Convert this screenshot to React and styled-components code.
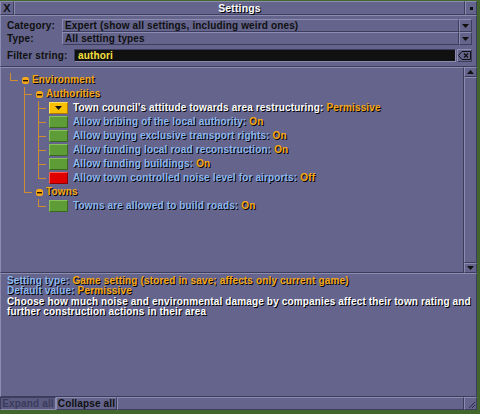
import styled, { createGlobalStyle, css } from "styled-components";

const C = {
  base: "#64648c",
  light: "#8c8cb0",
  dark: "#3c3c5c",
  orange: "#f6a818",
  blue: "#8cb8f0",
  white: "#fcfcfc",
  line: "#d08c30",
};

const GlobalStyle = createGlobalStyle`
  html, body { margin: 0; padding: 0; }
  body {
    width: 480px;
    height: 414px;
    overflow: hidden;
    background: #43662c;
    font-family: "Liberation Sans", Arial, sans-serif;
    font-weight: bold;
    font-size: 10px;
    letter-spacing: 0.15px;
  }
`;

const bevel = css`
  border-top: 1px solid ${C.light};
  border-left: 1px solid ${C.light};
  border-right: 1px solid ${C.dark};
  border-bottom: 1px solid ${C.dark};
  box-sizing: border-box;
`;

const sunken = css`
  border-top: 1px solid ${C.dark};
  border-left: 1px solid ${C.dark};
  border-right: 1px solid ${C.light};
  border-bottom: 1px solid ${C.light};
  box-sizing: border-box;
`;

const Window = styled.div`
  width: 477px;
  height: 409px;
  margin-top: 1px;
  display: flex;
  flex-direction: column;
  background: ${C.base};
`;

const TitleBar = styled.div`
  display: flex;
  height: 14px;
`;

const CloseBox = styled.div`
  ${bevel};
  width: 14px;
  display: flex;
  align-items: center;
  justify-content: center;
  color: #101010;
  font-size: 11px;
  line-height: 12px;
`;

const Caption = styled.div`
  ${bevel};
  flex: 1;
  text-align: center;
  color: ${C.white};
  text-shadow: 1px 1px 0 #000;
  line-height: 12px;
  font-size: 10.5px;
`;

const StickyBox = styled.div`
  ${bevel};
  width: 12px;
  display: flex;
  align-items: center;
  justify-content: center;

  &::after {
    content: "";
    width: 3px;
    height: 3px;
    background: #101010;
  }
`;

const TopPanel = styled.div`
  ${bevel};
  height: 52px;
  padding: 3px 4px 0 6px;
  display: flex;
  flex-direction: column;
`;

const FormRow = styled.div`
  display: flex;
  height: 13px;
  margin-top: ${(p) => p.$gap || 0}px;
`;

const Label = styled.div`
  width: ${(p) => p.$w}px;
  color: #101010;
  line-height: 13px;
`;

const DropText = styled.div`
  ${bevel};
  flex: 1;
  color: #101010;
  line-height: 11px;
  padding-left: 2px;
  white-space: nowrap;
  overflow: hidden;
`;

const ArrowButton = styled.div`
  ${bevel};
  width: ${(p) => p.$w || 13}px;
  height: ${(p) => p.$h || 13}px;
  display: flex;
  align-items: center;
  justify-content: center;
  flex-shrink: 0;
`;

const EditBox = styled.div`
  ${sunken};
  flex: 1;
  background: #111111;
  color: #f8e040;
  line-height: 11px;
  padding-left: 3px;
  margin-right: 1px;
`;

const TreePanel = styled.div`
  display: flex;
  height: 206px;
`;

const TreeList = styled.div`
  ${bevel};
  flex: 1;
  padding-top: 5px;
  display: flex;
  flex-direction: column;
`;

const Scrollbar = styled.div`
  width: 13px;
  display: flex;
  flex-direction: column;
`;

const Track = styled.div`
  ${bevel};
  flex: 1;
`;

const TreeRow = styled.div`
  display: flex;
  align-items: center;
  height: 14px;
  white-space: nowrap;
`;

const Guide = styled.svg`
  flex-shrink: 0;
  display: block;
`;

const GroupIcon = styled.svg`
  display: block;
  margin: 0 3px 0 3px;
  flex-shrink: 0;
`;

const Text = styled.span`
  color: ${(p) => p.$c};
  text-shadow: 1px 1px 0 #000;
  line-height: 14px;
`;

const swatches = {
  on: { bg: "#5e9c38", light: "#88c05c", dark: "#3a6820" },
  off: { bg: "#e00000", light: "#ff5a4a", dark: "#8c0000" },
  drop: { bg: "#f8c000", light: "#fce060", dark: "#b07800" },
};

const SettingBox = styled.div`
  width: 19px;
  height: 12px;
  box-sizing: border-box;
  margin: 0 5px 0 2px;
  flex-shrink: 0;
  background: ${(p) => swatches[p.$kind].bg};
  border-top: 1px solid ${(p) => swatches[p.$kind].light};
  border-left: 1px solid ${(p) => swatches[p.$kind].light};
  border-right: 1px solid ${(p) => swatches[p.$kind].dark};
  border-bottom: 1px solid ${(p) => swatches[p.$kind].dark};
  display: flex;
  align-items: center;
  justify-content: center;
`;

const HelpPanel = styled.div`
  ${bevel};
  height: 124px;
  padding: 2px 2px 3px 6px;
`;

const HelpLine = styled.div`
  line-height: 9.5px;
  white-space: nowrap;
  margin-top: ${(p) => p.$gap || 0}px;
  color: ${(p) => p.$c || C.white};
  text-shadow: 1px 1px 0 #000;
`;

const Value = styled.span`
  color: ${C.orange};
`;

const BottomRow = styled.div`
  display: flex;
  height: 13px;
`;

const Button = styled.div`
  ${(p) => (p.$pressed ? sunken : bevel)};
  width: ${(p) => p.$w}px;
  line-height: 11px;
  text-align: center;
  white-space: nowrap;
  color: ${(p) => (p.$pressed ? "#3a3a5c" : "#101010")};
  background: ${(p) => (p.$pressed ? "#5a5a80" : C.base)};
`;

const Filler = styled.div`
  ${bevel};
  flex: 1;
`;

const ResizeBox = styled.div`
  ${bevel};
  width: 13px;
  display: flex;
  align-items: flex-end;
  justify-content: flex-end;
`;

const Tri = ({ up }) => (
  <svg width="7" height="4" viewBox="0 0 7 4">
    <path d={up ? "M3.5 0 L7 4 L0 4 Z" : "M0 0 L7 0 L3.5 4 Z"} fill="#101010" />
  </svg>
);

const ClearIcon = () => (
  <svg width="13" height="9" viewBox="0 0 13 9">
    <path d="M4 0.5 H12.5 V8.5 H4 L0.5 4.5 Z" fill="none" stroke="#101010" />
    <path d="M6 2.5 L10 6.5 M10 2.5 L6 6.5" stroke="#101010" strokeWidth="1.2" />
  </svg>
);

// guides: one flag per ancestor level, true when that level's line continues
const Branch = ({ guides, last }) => (
  <>
    {guides.map((on, i) => (
      <Guide key={i} width="14" height="14">
        {on && <rect x="9" y="0" width="1" height="14" fill={C.line} />}
      </Guide>
    ))}
    <Guide width="18" height="14">
      <rect x="9" y="0" width="1" height={last ? 8 : 14} fill={C.line} />
      <rect x="9" y="7" width="8" height="1" fill={C.line} />
    </Guide>
  </>
);

const Minus = () => (
  <GroupIcon width="7" height="7" viewBox="0 0 7 7">
    <rect x="0" y="0" width="7" height="7" rx="2.5" fill={C.orange} />
    <rect x="1" y="3" width="5" height="1.4" fill="#201000" />
  </GroupIcon>
);

const rows = [
  { group: true, guides: [], last: true, label: "Environment" },
  { group: true, guides: [false], last: false, label: "Authorities" },
  { guides: [false, true], last: false, kind: "drop", label: "Town council's attitude towards area restructuring:", value: "Permissive", selected: true },
  { guides: [false, true], last: false, kind: "on", label: "Allow bribing of the local authority:", value: "On" },
  { guides: [false, true], last: false, kind: "on", label: "Allow buying exclusive transport rights:", value: "On" },
  { guides: [false, true], last: false, kind: "on", label: "Allow funding local road reconstruction:", value: "On" },
  { guides: [false, true], last: false, kind: "on", label: "Allow funding buildings:", value: "On" },
  { guides: [false, true], last: true, kind: "off", label: "Allow town controlled noise level for airports:", value: "Off" },
  { group: true, guides: [false], last: true, label: "Towns" },
  { guides: [false, false], last: true, kind: "on", label: "Towns are allowed to build roads:", value: "On" },
];

export default function App() {
  return (
    <>
      <GlobalStyle />
      <Window>
        <TitleBar>
          <CloseBox>X</CloseBox>
          <Caption>Settings</Caption>
          <StickyBox />
        </TitleBar>

        <TopPanel>
          <FormRow>
            <Label $w={55}>Category:</Label>
            <DropText>Expert (show all settings, including weird ones)</DropText>
            <ArrowButton><Tri /></ArrowButton>
          </FormRow>
          <FormRow>
            <Label $w={55}>Type:</Label>
            <DropText>All setting types</DropText>
            <ArrowButton><Tri /></ArrowButton>
          </FormRow>
          <FormRow $gap={4}>
            <Label $w={67}>Filter string:</Label>
            <EditBox>authori</EditBox>
            <ArrowButton $w={15}><ClearIcon /></ArrowButton>
          </FormRow>
        </TopPanel>

        <TreePanel>
          <TreeList>
            {rows.map((r, i) => (
              <TreeRow key={i}>
                <Branch guides={r.guides} last={r.last} />
                {r.group ? (
                  <>
                    <Minus />
                    <Text $c={C.orange}>{r.label}</Text>
                  </>
                ) : (
                  <>
                    <SettingBox $kind={r.kind}>{r.kind === "drop" && <Tri />}</SettingBox>
                    <Text $c={r.selected ? C.white : C.blue}>
                      {r.label} <Value>{r.value}</Value>
                    </Text>
                  </>
                )}
              </TreeRow>
            ))}
          </TreeList>
          <Scrollbar>
            <ArrowButton $h={10}><Tri up /></ArrowButton>
            <Track />
            <ArrowButton $h={10}><Tri /></ArrowButton>
          </Scrollbar>
        </TreePanel>

        <HelpPanel>
          <HelpLine $c={C.blue}>
            Setting type: <Value>Game setting (stored in save; affects only current game)</Value>
          </HelpLine>
          <HelpLine $c={C.blue}>
            Default value: <Value>Permissive</Value>
          </HelpLine>
          <HelpLine $gap={2}>
            Choose how much noise and environmental damage by companies affect their town rating and
          </HelpLine>
          <HelpLine>further construction actions in their area</HelpLine>
        </HelpPanel>

        <BottomRow>
          <Button $w={56} $pressed>Expand all</Button>
          <Button $w={61}>Collapse all</Button>
          <Filler />
          <ResizeBox>
            <svg width="8" height="8" viewBox="0 0 8 8">
              <path d="M7 1 L1 7 M7 4 L4 7" stroke="#2c2c48" strokeWidth="1" />
            </svg>
          </ResizeBox>
        </BottomRow>
      </Window>
    </>
  );
}
